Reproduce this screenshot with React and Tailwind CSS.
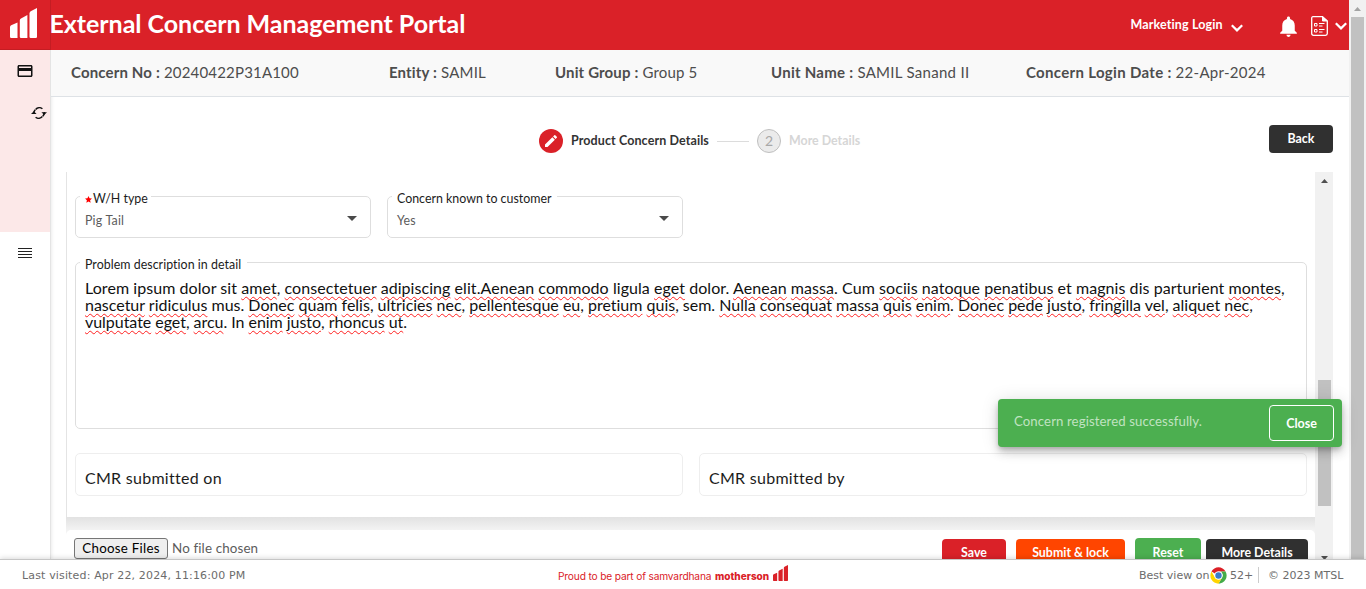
import React from "react";
import { MdCreditCard, MdEdit, MdNotifications } from "react-icons/md";

const Bars = ({ className }) => (
  <svg viewBox="0 0 27 30" className={className} fill="currentColor" preserveAspectRatio="none">
    <path d="M0 19.2Q0 17.8 1.2 17.3L7.5 14.4V30H1.2Q0 30 0 28.8Z" />
    <path d="M9.8 12.6Q9.8 11.2 11 10.5L17.4 7V30H11Q9.8 30 9.8 28.8Z" />
    <path d="M19.5 5.4Q19.5 4 20.7 3.3L27 0V28.8Q27 30 25.8 30H20.7Q19.5 30 19.5 28.8Z" />
  </svg>
);

const Chevron = ({ className }) => (
  <svg viewBox="0 0 12 8" className={className} fill="none" stroke="currentColor" strokeWidth="2.2">
    <path d="M0.8 1.2L6 6.4L11.2 1.2" />
  </svg>
);

const Info = ({ label, value, className, labelClass = "", valueClass = "" }) => (
  <div className={"flex shrink-0 gap-1 text-[15px] whitespace-nowrap text-[#4d4d4d] " + className}>
    <span className={"font-bold " + labelClass}>{label}</span>
    <span className={valueClass}>{value}</span>
  </div>
);

const Select = ({ label, value, required, gapClass }) => (
  <fieldset className="h-[42px] w-[296px] rounded-[5px] border border-[#dedede]">
    <legend className={"ml-1 h-0 pl-[5px] text-[12.4px] leading-[0px] whitespace-nowrap text-[#1c1c1c] " + gapClass}>
      <span className="relative top-[2px] flex h-0 items-center">
        {required && (
          <svg viewBox="0 0 10 10" className="mt-[2px] mr-px size-[7px] fill-[#ff0000]">
            <path d="M5 0L6.5 3.3L10 3.7L7.3 6L8.1 9.7L5 7.8L1.9 9.7L2.7 6L0 3.7L3.5 3.3Z" />
          </svg>
        )}
        {label}
      </span>
    </legend>
    <div className="flex h-[40px] items-center justify-between pr-[13px] pl-[9px] text-[12.4px] text-[#5c5c5c]">
      <span className="pt-[9px] tracking-[0.2px]">{value}</span>
      <svg viewBox="0 0 10 5" className="mt-[3px] h-[5px] w-[10px] fill-[#4a4a4a]">
        <path d="M0 0H10L5 5Z" />
      </svg>
    </div>
  </fieldset>
);

const lines = [
  ["tracking-[0.06px]", "Lorem ipsum dolor sit *amet*, *consectetuer* *adipiscing* *elit.Aenean* *commodo* ligula *eget* dolor. *Aenean* *massa*. Cum *sociis* *natoque* *penatibus* et *magnis* dis parturient *montes*,"],
  ["tracking-[-0.01px]", "*nascetur* *ridiculus* mus. *Donec* *quam* *felis*, *ultricies* *nec*, *pellentesque* *eu*, *pretium* *quis*, sem. *Nulla* *consequat* *massa* *quis* *enim*. *Donec* *pede* *justo*, *fringilla* *vel*, *aliquet* *nec*,"],
  ["tracking-[-0.04px]", "*vulputate* *eget*, *arcu*. In *enim* *justo*, *rhoncus* *ut*."],
];

const Line = ({ text }) =>
  text.split("*").map((part, i) =>
    i % 2 ? (
      <span
        key={i}
        className="underline decoration-[#ff2020] decoration-wavy decoration-[0.8px] underline-offset-[2px] [text-decoration-skip-ink:none]"
      >
        {part}
      </span>
    ) : (
      <React.Fragment key={i}>{part}</React.Fragment>
    )
  );

const Button = ({ children, className }) => (
  <button className={"h-7 rounded-[4px] text-[12.4px] font-bold whitespace-nowrap text-white " + className}>{children}</button>
);

export default function App() {
  return (
    <div className="relative flex h-[589px] w-[1366px] flex-col overflow-hidden bg-white font-['Lato',sans-serif]">
      <div className="flex h-[559px] shrink-0 overflow-hidden">
        <aside className="flex w-[51px] shrink-0 flex-col border-r border-[#e4e4e4] shadow-[1px_0_3px_rgba(0,0,0,0.08)]">
          <div className="-mr-px h-[50px] border-r border-b border-[#c41d23] bg-[#da2128] pt-2 pl-[10px] text-white">
            <Bars className="h-[30px] w-[27px]" />
          </div>
          <div className="flex h-[182px] flex-col bg-[#fce8e8] text-[#111]">
            <MdCreditCard className="mt-[12px] ml-[16px] size-[18px]" />
            <svg viewBox="0 0 16 12" className="mt-[27px] ml-[31px] h-3 w-4" fill="none" stroke="currentColor" strokeWidth="1.5">
              <path d="M4.6 2.4C6.6 0.3 9.6 0.2 11.4 1.8M13.2 5.2C13.4 7 12.8 8.2 11.8 9.3M11.4 9.6C9.4 11.7 6.4 11.8 4.6 10.2M2.8 6.8C2.6 5 3.2 3.8 4.2 2.7" />
              <path d="M0 7.1L2.8 4.2L5.6 7.1ZM10.4 5.2L13.2 8L16 5.2Z" fill="currentColor" stroke="none" />
            </svg>
          </div>
          <div className="mt-4 ml-[18px] flex w-[14px] flex-col gap-[2px]">
            <i className="h-px bg-[#222]" />
            <i className="h-px bg-[#222]" />
            <i className="h-px bg-[#222]" />
            <i className="h-px bg-[#222]" />
          </div>
        </aside>

        <div className="flex w-[1298px] shrink-0 flex-col">
          <header className="flex h-[50px] shrink-0 items-start bg-[#da2128] text-white">
            <h1 className="-ml-[1.5px] w-[1081px] pt-[8px] text-[25px] leading-[31px] font-bold tracking-[-0.04px]">External Concern Management Portal</h1>
            <span className="w-[100px] pt-[17px] text-[12.5px] leading-4 font-bold tracking-[0.13px] whitespace-nowrap">Marketing Login</span>
            <Chevron className="mt-6 h-2 w-3" />
            <MdNotifications className="mt-[14px] ml-[33px] size-[25px]" />
            <svg viewBox="0 0 17 20" className="mt-4 ml-[10px] h-5 w-[17px]" fill="none" stroke="currentColor">
              <path d="M2 0.7H11.5L16.3 5V17.5Q16.3 19.3 14.5 19.3H2.5Q0.7 19.3 0.7 17.5V2.2Q0.7 0.7 2 0.7Z" strokeWidth="1.3" />
              <path d="M11.5 0.7V5H16.3Z" fill="currentColor" />
              <path d="M3.5 7.5H6V10H3.5ZM3.5 13.5H6V16H3.5ZM8 7.5H13.5M8 10H11.5M8 13.5H13.5M8 16H11.5" />
            </svg>
            <Chevron className="mt-[22px] ml-[7px] h-2 w-3" />
          </header>

          <div className="flex h-[47px] shrink-0 items-center border-b border-[#dee2e6] bg-[#f9f9f9] pb-[2px] pl-5">
            <Info className="w-[318px]" label="Concern No :" value="20240422P31A100" labelClass="tracking-[0.15px]" valueClass="tracking-[0.18px]" />
            <Info className="w-[166px]" label="Entity :" value="SAMIL" labelClass="tracking-[0.15px]" valueClass="tracking-[0.21px]" />
            <Info className="w-[216px]" label="Unit Group :" value="Group 5" labelClass="tracking-[0.15px]" valueClass="tracking-[0.17px]" />
            <Info className="w-[255px]" label="Unit Name :" value="SAMIL Sanand II" labelClass="tracking-[0.27px]" valueClass="tracking-[0.29px]" />
            <Info className="" label="Concern Login Date :" value="22-Apr-2024" labelClass="tracking-[0.32px]" valueClass="tracking-[0.27px]" />
          </div>

          <div className="flex h-[75px] shrink-0 items-center pt-[13px] pl-[488px]">
            <span className="flex size-6 items-center justify-center rounded-full bg-[#da2128] text-white">
              <MdEdit className="size-4" />
            </span>
            <span className="ml-2 w-[146px] text-[12.5px] font-bold tracking-[0.1px] whitespace-nowrap text-[#333]">Product Concern Details</span>
            <i className="h-px w-8 bg-[#dcdcdc]" />
            <span className="ml-2 flex size-6 items-center justify-center rounded-full border border-[#bfbfbf] bg-[#ebebeb] pb-[2px] text-[14px] text-[#a8a8a8]">2</span>
            <span className="ml-2 w-[480px] text-[12.4px] font-bold text-[#d6d6d6]">More Details</span>
            <Button className="mb-1 w-16 bg-[#303030] pt-px">Back</Button>
          </div>

          <div className="ml-[15px] flex h-[387px] w-[1267px] shrink-0 overflow-hidden">
            <div className="flex w-[1249px] shrink-0 flex-col bg-[#f3f3f3]">
              <section className="flex h-[345px] shrink-0 flex-col border-l border-[#e4e4e4] bg-white pt-6 pl-2">
                <div className="flex gap-4">
                  <Select label="W/H type" value="Pig Tail" required gapClass="w-[71px]" />
                  <Select label="Concern known to customer" value="Yes" gapClass="w-[165px]" />
                </div>
                <fieldset className="mt-6 h-[167px] w-[1232px] rounded-[5px] border border-[#dedede]">
                  <legend className="ml-1 w-[167px] pl-[5px] text-[12.4px] leading-[0px] tracking-[0.04px] whitespace-nowrap text-[#1c1c1c]">
                    <span className="relative top-[2px]">Problem description in detail</span>
                  </legend>
                  <div className="flex flex-col items-start pt-[16px] pl-[9px] text-[16px] leading-[17px] whitespace-nowrap text-[#111]">
                    {lines.map(([tracking, text]) => (
                      <p key={tracking} className={tracking}>
                        <Line text={text} />
                      </p>
                    ))}
                  </div>
                </fieldset>
                <div className="mt-6 flex gap-4 text-[16px] tracking-[0.28px] text-[#1c1c1c]">
                  <div className="flex h-[43px] w-[608px] items-center rounded-[5px] border border-[#eee] pt-[7px] pl-[9px]">CMR submitted on</div>
                  <div className="flex h-[43px] w-[608px] items-center rounded-[5px] border border-[#eee] pt-[7px] pl-[9px]">CMR submitted by</div>
                </div>
              </section>
              <div className="h-[13px] shrink-0 bg-linear-to-b from-[#e2e2e2] to-[#f3f3f3]" />
              <section className="flex h-12 shrink-0 items-start rounded-t-[5px] bg-white pl-2">
                <button className="mt-2 h-[21px] w-[94px] rounded-[3px] border border-[#767676] bg-[#efefef] text-[13.33px] leading-[19px] tracking-[0.26px] text-black">Choose Files</button>
                <span className="mt-[10px] ml-1 w-[770px] text-[13.4px] leading-4 tracking-[0.13px] text-[#5c5c5c]">No file chosen</span>
                <Button className="mt-[9px] w-16 bg-[#da2128] pt-px">Save</Button>
                <Button className="mt-[9px] ml-[10px] w-[109px] bg-[#ff4500] pt-px">Submit &amp; lock</Button>
                <Button className="mt-2 ml-[10px] w-[66px] bg-[#4caf50] pt-[3px]">Reset</Button>
                <Button className="mt-[9px] ml-[5px] w-[102px] bg-[#303030] pt-px">More Details</Button>
              </section>
            </div>
            <div className="flex w-[18px] shrink-0 flex-col items-center bg-[#f1f1f1]">
              <svg viewBox="0 0 7 4" className="mt-[7px] h-1 w-[7px] shrink-0 fill-[#505050]"><path d="M0 4L3.5 0L7 4Z" /></svg>
              <i className="mt-[197px] h-[126px] w-[13px] shrink-0 bg-[#c1c1c1]" />
              <svg viewBox="0 0 7 4" className="mt-[50px] h-1 w-[7px] shrink-0 fill-[#505050]"><path d="M0 0L3.5 4L7 0Z" /></svg>
            </div>
          </div>
        </div>

        <div className="flex w-[17px] shrink-0 flex-col items-center bg-[#f1f1f1]">
          <svg viewBox="0 0 7 4" className="mt-[7px] h-1 w-[7px] shrink-0 fill-[#a3a3a3]"><path d="M0 4L3.5 0L7 4Z" /></svg>
          <i className="mt-[6px] h-[560px] w-[13px] shrink-0 bg-[#c1c1c1]" />
        </div>
      </div>

      <footer className="z-10 flex h-[30px] shrink-0 items-center border-t border-[#c6c6c6] bg-white pl-[22px] font-['DejaVu_Sans',sans-serif] text-[11px] whitespace-nowrap text-[#6c6c6c] shadow-[0_-1px_5px_rgba(0,0,0,0.15)]">
        <span className="w-[536px] pt-[3px] tracking-[0.15px]">Last visited: Apr 22, 2024, 11:16:00 PM</span>
        <span className="flex w-[581px] items-center pb-[3px] text-[#da2128]">
          <span className="w-[157px] pt-[8px] font-['Inter',sans-serif] text-[10.2px] tracking-[-0.16px]">Proud to be part of samvardhana</span>
          <span className="w-[58px] pt-[8px] font-['Inter',sans-serif] text-[10px] font-extrabold">motherson</span>
          <Bars className="h-4 w-[15px]" />
        </span>
        <span className="w-[71px] pt-[3px]">Best view on</span>
        <svg viewBox="0 0 48 48" className="mt-px size-[17px]">
          <circle cx="24" cy="24" r="23" fill="#fff" />
          <path d="M4.1 12.5A23 23 0 0 1 43.9 12.5H24A11.5 11.5 0 0 0 14 18.3Z" fill="#db1f26" />
          <path d="M43.9 12.5A23 23 0 0 1 24 47L34 29.7A11.5 11.5 0 0 0 33 16.5L31 12.5Z" fill="#44ab48" />
          <path d="M4.1 12.5A23 23 0 0 0 24 47L33 31.2A11.5 11.5 0 0 1 14 29.7Z" fill="#ffd500" />
          <circle cx="24" cy="24" r="11.5" fill="#fff" />
          <circle cx="24" cy="24" r="9" fill="#3a7cc8" />
        </svg>
        <span className="ml-[3px] w-[28px] pt-[3px]">52+</span>
        <i className="mt-px h-4 w-px bg-[#ccc]" />
        <span className="ml-[9px] pt-[3px]">© 2023 MTSL</span>
      </footer>

      <div className="absolute top-[399px] left-[998px] z-20 flex h-12 w-[344px] items-center justify-between rounded-[4px] bg-[#4caf50] pr-2 pl-4 shadow-[0_3px_5px_-1px_rgba(0,0,0,0.2),0_6px_10px_rgba(0,0,0,0.14),0_1px_18px_rgba(0,0,0,0.12)]">
        <span className="pb-[3px] text-[13.2px] tracking-[0.1px] text-[#c0e3c1]">Concern registered successfully.</span>
        <button className="h-9 w-[65px] rounded-[4px] border border-white pt-[3px] text-[12.5px] font-bold text-white">Close</button>
      </div>
    </div>
  );
}
